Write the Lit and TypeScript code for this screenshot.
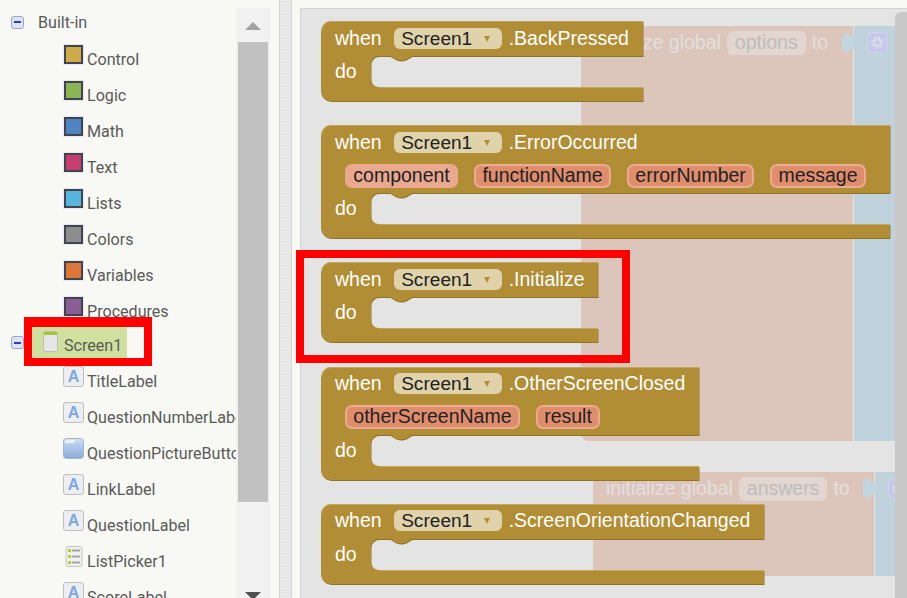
import { LitElement, html, css, svg } from 'lit';
import { customElement } from 'lit/decorators.js';

const swatches = [
    ['Control', '#cdab4a'],
    ['Logic', '#89b652'],
    ['Math', '#4f83c1'],
    ['Text', '#c43f70'],
    ['Lists', '#58b5dc'],
    ['Colors', '#8d8d8d'],
    ['Variables', '#dd7639'],
    ['Procedures', '#8a5f96'],
];

const components = [
    ['TitleLabel', 'label'],
    ['QuestionNumberLabel', 'label'],
    ['QuestionPictureButton', 'button'],
    ['LinkLabel', 'label'],
    ['QuestionLabel', 'label'],
    ['ListPicker1', 'list'],
    ['ScoreLabel', 'label'],
];

// canvas coordinates are relative to the workspace corner (300, 8)
const blocks = [
    { x: 21, y: 13, w: 322, lift: 0, event: '.BackPressed', params: [] },
    {
        x: 21,
        y: 117,
        w: 569,
        lift: 0,
        event: '.ErrorOccurred',
        params: ['component', 'functionName', 'errorNumber', 'message'],
    },
    { x: 21, y: 254, w: 277, lift: 0, event: '.Initialize', params: [] },
    { x: 21, y: 359, w: 378, lift: 1, event: '.OtherScreenClosed', params: ['otherScreenName', 'result'] },
    { x: 21, y: 496, w: 443, lift: 1, event: '.ScreenOrientationChanged', params: [] },
];

const globals = [
    { x: 281, y: 18, pink: 272, blue: 42, h: 415, name: 'options' },
    { x: 293, y: 464, pink: 281, blue: 20, h: 104, name: 'answers' },
];

const blockPath = (w: number, bar: number, cut: number, h: number) =>
    `M0 10 A10 10 0 0 1 10 0 H${w} V${bar} H91 L85 ${bar + 3.5} Q80 ${bar + 5.5} 75 ${bar + 3.5} L69 ${bar} H58 ` +
    `A8 8 0 0 0 50 ${bar + 8} V${cut - 8} A8 8 0 0 0 58 ${cut} H${w} V${h} H10 A10 10 0 0 1 0 ${h - 10} Z`;

@customElement('app-root')
export class AppRoot extends LitElement {
    static styles = css`
        :host {
            display: block;
            width: 907px;
            height: 598px;
            overflow: hidden;
            background: #f8f9f4;
        }

        .app {
            display: flex;
            height: 598px;
        }

        .sidebar {
            display: flex;
            flex: none;
            width: 279px;
            height: 590px;
            padding-top: 8px;
            position: relative;
            font: 16.1px Roboto, sans-serif;
            color: #5a5a5a;
        }

        .tree {
            flex: none;
            width: 236px;
            overflow: hidden;
        }

        .root {
            box-sizing: border-box;
            display: flex;
            align-items: center;
            height: 32px;
            padding: 0 0 4px 11px;
        }

        .root span {
            margin-left: 14px;
            margin-top: 1px;
        }

        .minus {
            flex: none;
            box-sizing: border-box;
            display: flex;
            align-items: center;
            justify-content: center;
            width: 13px;
            height: 13px;
            border: 1px solid #99a3d6;
            border-radius: 3px;
            background: #dfe4f5;
        }

        .minus::before {
            content: '';
            width: 7px;
            height: 2px;
            background: #2a3fc8;
        }

        .row {
            display: flex;
            height: 36px;
            padding-left: 63px;
            white-space: nowrap;
        }

        .row > span {
            margin-left: 3px;
            line-height: 41px;
        }

        .row.palette > span {
            line-height: 39px;
        }

        .swatch {
            flex: none;
            box-sizing: border-box;
            width: 19px;
            height: 19px;
            margin: 5px 1px 0;
            border: 2px solid #43434d;
            box-shadow: 0 0 0 1px #e4e8f5;
        }

        .icon {
            flex: none;
            margin-top: 5px;
            display: block;
        }

        .screen {
            display: flex;
            align-items: flex-start;
            height: 33px;
            padding-left: 11px;
        }

        .screen .minus {
            margin-top: 8px;
        }

        .selected {
            display: flex;
            align-items: flex-start;
            box-sizing: border-box;
            width: 95px;
            height: 31px;
            margin: -1px 0 0 8px;
            padding: 4px 0 0 11px;
            background: #d0e09e;
        }

        .selected span {
            margin-left: 6px;
            line-height: 30px;
            height: 22px;
        }

        .scrollbar {
            flex: none;
            display: flex;
            flex-direction: column;
            align-items: center;
            width: 34px;
            height: 590px;
            background: #f1f1f1;
        }

        .up,
        .down {
            flex: none;
            width: 0;
            height: 0;
            border-left: 8px solid transparent;
            border-right: 8px solid transparent;
        }

        .up {
            margin: 14px 0 12px;
            border-bottom: 8px solid #a3a3a3;
        }

        .thumb {
            flex: none;
            width: 30px;
            height: 460px;
            background: #c1c1c1;
        }

        .down {
            margin-top: 90px;
            border-top: 8px solid #505050;
        }

        .splitter {
            flex: none;
            box-sizing: border-box;
            width: 13px;
            border-left: 1px solid #d4d4d4;
            border-right: 1px solid #d4d4d4;
            background-color: #e7e7e7;
            background-image: repeating-linear-gradient(0deg, #ebebeb 0 1px, transparent 1px 3px),
                repeating-linear-gradient(90deg, #e3e3e3 0 1px, transparent 1px 3px);
        }

        .workspace {
            flex: none;
            width: 607px;
            height: 590px;
            margin: 8px 0 0 8px;
            position: relative;
            overflow: hidden;
            background: #e4e4e4;
            box-shadow: inset 1px 1px 0 #d2d2d2;
            font: 19.5px 'Liberation Sans', Arial, sans-serif;
            color: #fff;
        }

        .global {
            position: absolute;
            display: flex;
            color: #e4dfdc;
        }

        .pink {
            box-sizing: border-box;
            display: flex;
            gap: 6px;
            padding: 5px 0 0 13px;
            align-items: flex-start;
            background: #dcc6bc;
            border-radius: 0 0 0 8px;
            white-space: nowrap;
        }

        .pink span {
            height: 24px;
            line-height: 23px;
        }

        .pink .name {
            padding: 0 8px;
            border-radius: 6px;
            background: #e3d6d0;
            color: #bdbdbd;
        }

        .blue {
            box-sizing: border-box;
            position: relative;
            margin-left: 1px;
            padding: 6px 0 0 13px;
            background: #c0d3dd;
        }

        .tab {
            position: absolute;
            left: -12px;
            top: 7px;
        }

        .gear {
            display: block;
        }

        .block {
            position: absolute;
        }

        .block svg {
            position: absolute;
            left: 0;
            top: 0;
            overflow: visible;
        }

        .block .main {
            fill: #b18e35;
        }

        .block .shade {
            fill: #8f7329;
        }

        .block .light {
            fill: none;
            stroke: #c4a75e;
            stroke-width: 1;
        }

        .lines {
            position: relative;
            padding-left: 14px;
        }

        .head {
            display: flex;
            align-items: center;
            height: 35px;
            white-space: nowrap;
        }

        .field {
            display: flex;
            align-items: center;
            box-sizing: border-box;
            width: 108px;
            height: 21px;
            margin: 0 7px 0 12px;
            padding-left: 7.5px;
            border-radius: 6px;
            background: #e0d2ab;
            color: #222;
            font-size: 19.1px;
        }

        .field i {
            width: 0;
            height: 0;
            margin-left: 12px;
            border-left: 3.5px solid transparent;
            border-right: 3.5px solid transparent;
            border-top: 6px solid #b18e35;
        }

        .args {
            display: flex;
            gap: 16px;
            box-sizing: border-box;
            height: 33px;
            margin-left: -3px;
            padding: 4px 0 0 13px;
        }

        .arg {
            box-sizing: border-box;
            height: 24px;
            padding: 0 6.3px;
            border: 2px solid #ebab90;
            border-radius: 7px;
            background: #e08d6e;
            color: #222;
            line-height: 19px;
            white-space: nowrap;
        }

        .arg.pale {
            background: #e9a88f;
            border-color: #e9a88f;
        }

        .do {
            height: 32px;
            line-height: 30px;
        }

        .scroll {
            position: absolute;
            right: 0;
            top: 4px;
            bottom: 0;
            width: 12px;
            background: #c8c8c8;
            border-radius: 6px 0 0 0;
        }

        .mark {
            position: absolute;
            box-sizing: border-box;
            border: 8px solid #f00;
            pointer-events: none;
        }

        .mark.tree-mark {
            left: 24px;
            top: 317px;
            width: 128px;
            height: 49px;
            border-top-width: 10px;
        }

        .mark.block-mark {
            left: 296px;
            top: 250px;
            width: 334px;
            height: 113px;
        }
    `;

    renderIcon(kind: string) {
        if (kind === 'button') {
            return html`<svg class="icon" width="21" height="21" viewBox="0 0 21 21">
                <defs>
                    <linearGradient id="btn" x1="0" y1="0" x2="0" y2="1">
                        <stop offset="0" stop-color="#d5e2f5" />
                        <stop offset="0.3" stop-color="#b5cdec" />
                        <stop offset="1" stop-color="#8aabd8" />
                    </linearGradient>
                </defs>
                <rect x="0.5" y="0.5" width="20" height="20" rx="3" fill="url(#btn)" stroke="#a9b5c6" />
                <rect x="2" y="2" width="10" height="3" rx="1.5" fill="#e9f0fa" />
            </svg>`;
        }
        if (kind === 'list') {
            return html`<svg class="icon" width="21" height="21" viewBox="0 0 21 21">
                <rect x="3" y="0.5" width="16" height="20" rx="2" fill="#f0f0ec" stroke="#c4c4c4" />
                <rect x="5" y="3" width="3" height="3" fill="#b4cc3c" />
                <rect x="5" y="9" width="3" height="3" fill="#b4cc3c" />
                <rect x="5" y="15" width="3" height="3" fill="#b4cc3c" />
                <rect x="9" y="3.5" width="8" height="2" fill="#a5a5a5" />
                <rect x="9" y="9.5" width="8" height="2" fill="#a5a5a5" />
                <rect x="9" y="15.5" width="8" height="2" fill="#a5a5a5" />
            </svg>`;
        }
        return html`<svg class="icon" width="21" height="21" viewBox="0 0 21 21">
            <rect x="0.5" y="0.5" width="20" height="20" rx="2.5" fill="#eceef2" stroke="#bfbfbf" />
            <text x="10.5" y="16" text-anchor="middle" font-family="Liberation Sans" font-weight="700"
                font-size="16" fill="#7ea6e0">A</text>
        </svg>`;
    }

    renderBlock(b: (typeof blocks)[number]) {
        const extra = b.params.length ? 33 : 0;
        const bar = 35 + extra;
        const cut = 66 + extra;
        const h = 80 + extra;
        const d = blockPath(b.w, bar, cut, h);
        const light = `M1 10 A9 9 0 0 1 10 0.5 H${b.w} M58 ${cut + 0.5} H${b.w}`;
        return html`<div class="block" style="left:${b.x}px;top:${b.y}px;width:${b.w}px;height:${h}px">
            <svg width=${b.w} height=${h}>
                ${svg`<path class="shade" transform="translate(0.5 1)" d=${d}></path>
                <path class="main" d=${d}></path>
                <path class="light" d=${light}></path>`}
            </svg>
            <div class="lines">
                <div style="margin:${-b.lift}px 0 ${b.lift}px">
                    <div class="head">
                        <span>when</span>
                        <div class="field"><span>Screen1</span><i></i></div>
                        <span>${b.event}</span>
                    </div>
                    ${b.params.length
                        ? html`<div class="args">
                              ${b.params.map(
                                  (p) => html`<span class="arg ${p === 'component' ? 'pale' : ''}">${p}</span>`
                              )}
                          </div>`
                        : ''}
                </div>
                <div class="do">do</div>
            </div>
        </div>`;
    }

    renderGlobal(g: (typeof globals)[number]) {
        return html`<div class="global" style="left:${g.x}px;top:${g.y}px;height:${g.h}px">
            <div class="pink" style="width:${g.pink}px">
                <span>initialize global</span>
                <span class="name">${g.name}</span>
                <span>to</span>
            </div>
            <div class="blue" style="width:${g.blue}px">
                <svg class="tab" width="12" height="19" viewBox="0 0 12 19">
                    <path d="M6 0 C2 0 0 2 0 5 V14 C0 17 2 19 6 19 L9 15.5 H12 V3.5 H9 Z" fill="#c2d6e0" />
                </svg>
                <svg class="gear" width="21" height="21" viewBox="0 0 21 21">
                    <rect x="0.5" y="0.5" width="20" height="20" rx="4" fill="#c5c8ea" stroke="#d0d5e9" />
                    <circle cx="10.5" cy="10.5" r="3.4" fill="none" stroke="#d9dce9" stroke-width="2.2" />
                    <circle cx="10.5" cy="10.5" r="5.4" fill="none" stroke="#d9dce9" stroke-width="2"
                        stroke-dasharray="2.1 2.14" />
                </svg>
            </div>
        </div>`;
    }

    render() {
        return html`
            <div class="app">
                <div class="sidebar">
                    <div class="tree">
                        <div class="root"><div class="minus"></div><span>Built-in</span></div>
                        ${swatches.map(
                            ([name, color]) => html`<div class="row palette">
                                <div class="swatch" style="background-color:${color}"></div>
                                <span>${name}</span>
                            </div>`
                        )}
                        <div class="screen">
                            <div class="minus"></div>
                            <div class="selected">
                                <svg width="15" height="21" viewBox="0 0 15 21">
                                    <rect x="0.5" y="0.5" width="14" height="20" rx="2" fill="#e6e6e6" stroke="#bdbdbd" />
                                    <rect x="1" y="1" width="13" height="3" fill="#a9c535" />
                                </svg>
                                <span>Screen1</span>
                            </div>
                        </div>
                        ${components.map(
                            ([name, kind]) => html`<div class="row">
                                ${this.renderIcon(kind)}
                                <span>${name}</span>
                            </div>`
                        )}
                    </div>
                    <div class="scrollbar">
                        <div class="up"></div>
                        <div class="thumb"></div>
                        <div class="down"></div>
                    </div>
                </div>
                <div class="splitter"></div>
                <div class="workspace">
                    ${globals.map((g) => this.renderGlobal(g))}
                    ${blocks.map((b) => this.renderBlock(b))}
                    <div class="scroll"></div>
                </div>
            </div>
            <div class="mark tree-mark"></div>
            <div class="mark block-mark"></div>
        `;
    }
}
